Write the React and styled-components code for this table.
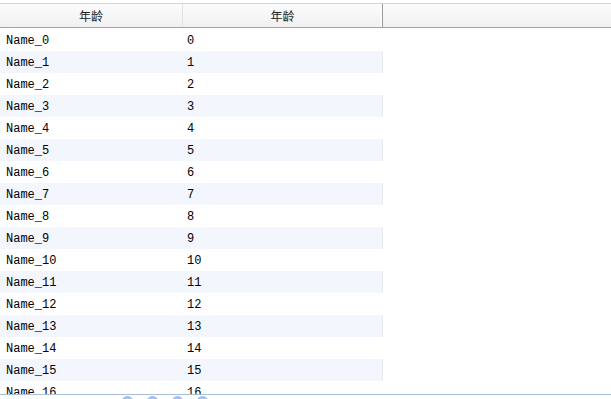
import React from 'react'
import styled, { createGlobalStyle } from 'styled-components'

const GlobalStyle = createGlobalStyle`
  html, body {
    margin: 0;
    padding: 0;
    background: #fff;
    overflow: hidden;
  }
`

const Grid = styled.div`
  width: 611px;
  height: 399px;
  display: flex;
  flex-direction: column;
  overflow: hidden;
  background: #fff;
`

const Header = styled.div`
  display: flex;
  height: 23px;
  margin-top: 3px;
  border-top: 1px solid #d4d3e6;
  border-bottom: 1px solid #a3a3a3;
  background: linear-gradient(#fcfcfc, #f0f0f0);
  flex-shrink: 0;
`

const HeadCell = styled.div`
  width: ${(p) => p.w}px;
  display: flex;
  align-items: center;
  justify-content: center;
  font-family: "Noto Sans CJK SC", "Liberation Sans", sans-serif;
  font-size: 12px;
  color: #222;
  border-right: ${(p) => (p.last ? '1px solid #9a9a9a' : '1px solid #e2e2e2')};
  box-shadow: ${(p) => (p.last ? 'inset -2px 0 0 #fafafa' : 'none')};
`

const Body = styled.div`
  flex: 1;
  overflow: hidden;
  padding-top: 1px;
`

const Row = styled.div`
  display: flex;
  width: 382px;
  height: 22px;
  align-items: center;
  background: ${(p) => (p.alt ? '#f3f6fc' : '#fff')};
  border-right: 1px solid ${(p) => (p.alt ? '#e6e8f2' : '#fff')};
`

const Cell = styled.div`
  width: ${(p) => p.w}px;
  padding-left: ${(p) => p.pad}px;
  padding-top: 2px;
  box-sizing: border-box;
  font-family: "Liberation Mono", "DejaVu Sans Mono", monospace;
  font-size: 12px;
  color: #000;
  white-space: nowrap;
`

const Pager = styled.div`
  height: 4px;
  flex-shrink: 0;
  border-top: 1px solid #a9bfd6;
  background: #fff;
  display: flex;
  gap: 14px;
  padding-left: 122px;
  overflow: hidden;
`

const PagerIcon = styled.div`
  width: 11px;
  height: 10px;
  margin-top: 1px;
  border-radius: 50%;
  background: #8fb3e6;
  opacity: 0.8;
`

const rows = Array.from({ length: 17 }, (_, i) => ({ name: `Name_${i}`, age: i }))

export default function App() {
  return (
    <>
      <GlobalStyle />
      <Grid>
        <Header>
          <HeadCell w={182}>年龄</HeadCell>
          <HeadCell w={199} last>年龄</HeadCell>
        </Header>
        <Body>
          {rows.map((r, i) => (
            <Row key={r.name} alt={i % 2 === 1}>
              <Cell w={183} pad={6}>{r.name}</Cell>
              <Cell w={199} pad={4}>{r.age}</Cell>
            </Row>
          ))}
        </Body>
        <Pager>
          <PagerIcon />
          <PagerIcon />
          <PagerIcon />
          <PagerIcon />
        </Pager>
      </Grid>
    </>
  )
}
